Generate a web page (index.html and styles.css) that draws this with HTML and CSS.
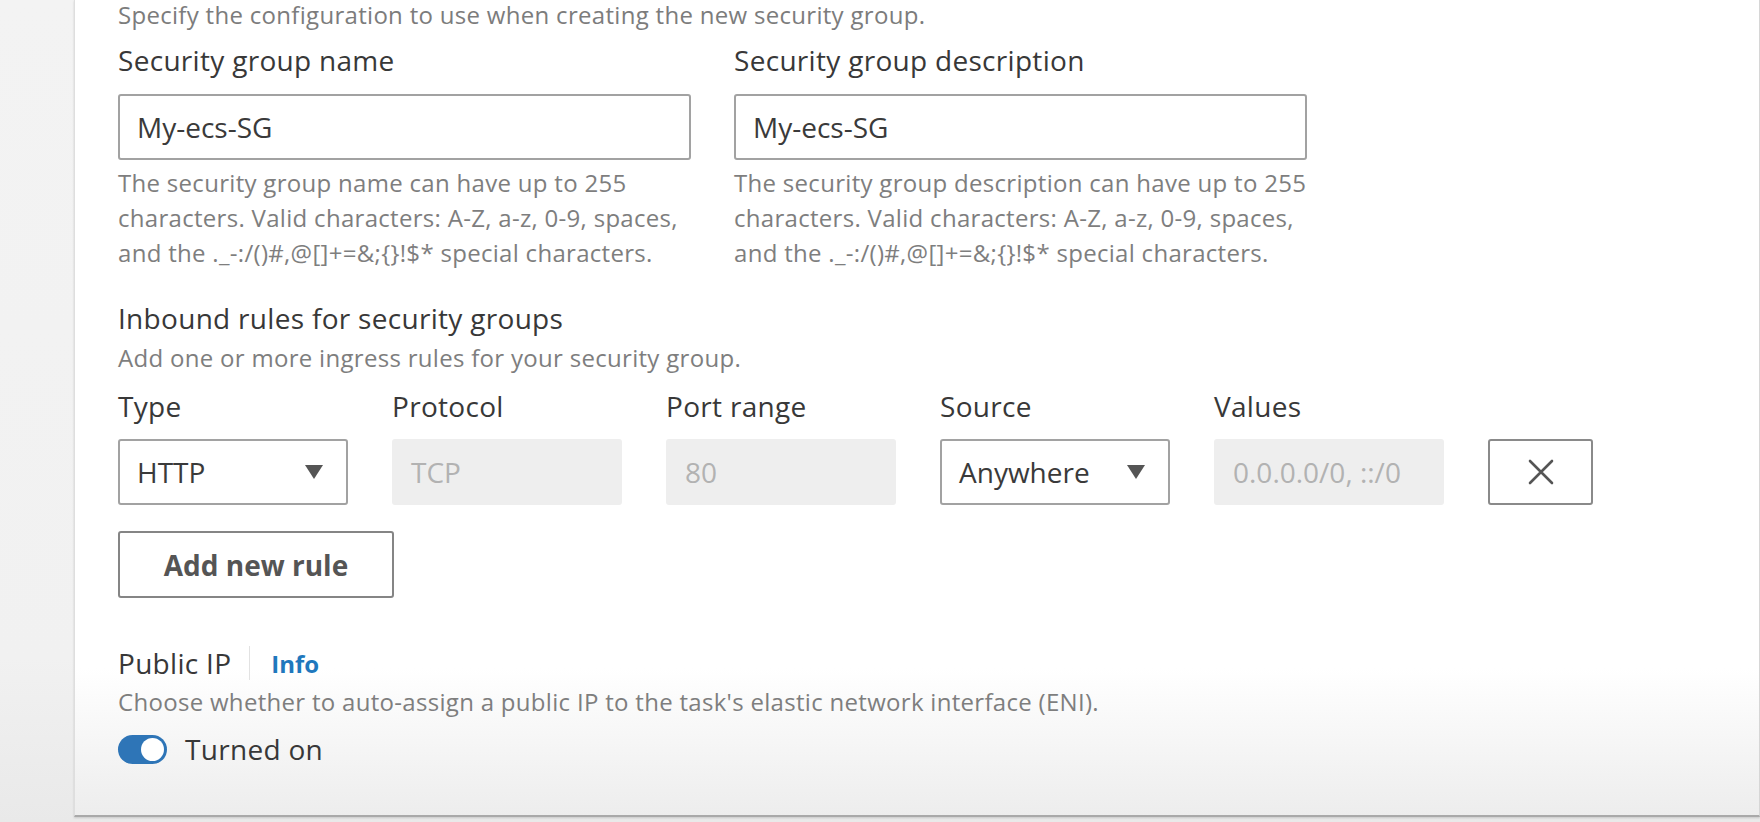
FILE: index.html
```html
<!DOCTYPE html>
<html lang="en">
<head>
<meta charset="utf-8">
<title>Security group configuration</title>
<link rel="stylesheet" href="styles.css">
</head>
<body>
<div class="page">
  <div class="gutter"></div>
  <main class="panel">
    <p class="intro">Specify the configuration to use when creating the new security group.</p>

    <div class="two-col">
      <div class="field">
        <label class="label">Security group name</label>
        <div class="input">My-ecs-SG</div>
        <p class="help">The security group name can have up to 255<br>characters. Valid characters: A-Z, a-z, 0-9, spaces,<br>and the ._-:/()#,@[]+=&amp;;{}!$* special characters.</p>
      </div>
      <div class="field">
        <label class="label">Security group description</label>
        <div class="input">My-ecs-SG</div>
        <p class="help">The security group description can have up to 255<br>characters. Valid characters: A-Z, a-z, 0-9, spaces,<br>and the ._-:/()#,@[]+=&amp;;{}!$* special characters.</p>
      </div>
    </div>

    <h3 class="section-title">Inbound rules for security groups</h3>
    <p class="section-desc">Add one or more ingress rules for your security group.</p>

    <div class="rules">
      <div class="label">Type</div>
      <div class="label">Protocol</div>
      <div class="label">Port range</div>
      <div class="label">Source</div>
      <div class="label">Values</div>
      <div></div>

      <div class="select">
        <span>HTTP</span>
        <svg class="caret" width="20" height="16" viewBox="0 0 20 16"><polygon points="1,1 19,1 10,15" fill="#555"/></svg>
      </div>
      <div class="input disabled">TCP</div>
      <div class="input disabled">80</div>
      <div class="select">
        <span>Anywhere</span>
        <svg class="caret" width="20" height="16" viewBox="0 0 20 16"><polygon points="1,1 19,1 10,15" fill="#555"/></svg>
      </div>
      <div class="input disabled">0.0.0.0/0, ::/0</div>
      <button class="icon-btn" type="button" aria-label="Remove">
        <svg width="28" height="28" viewBox="0 0 28 28"><path d="M3 3 L25 25 M25 3 L3 25" stroke="#555" stroke-width="2.6" stroke-linecap="round" fill="none"/></svg>
      </button>
    </div>

    <button class="btn" type="button">Add new rule</button>

    <div class="ip-head">
      <span class="ip-title">Public IP</span>
      <span class="divider"></span>
      <a class="info" href="#">Info</a>
    </div>
    <p class="section-desc tight">Choose whether to auto-assign a public IP to the task's elastic network interface (ENI).</p>

    <div class="toggle-row">
      <span class="toggle"><span class="knob"></span></span>
      <span class="toggle-text">Turned on</span>
    </div>
  </main>
</div>
</body>
</html>
```

FILE: styles.css
```css
html, body {
  margin: 0;
  padding: 0;
}

body {
  background: #f1f1f1;
  font-family: "Open Sans", "DejaVu Sans", sans-serif;
  color: #3a3a3a;
  overflow: hidden;
}

.page {
  display: flex;
  height: 822px;
  background: linear-gradient(to bottom, #f3f3f3 0%, #f1f1f1 80%, #e9e9e9 100%);
}

.gutter {
  width: 74px;
  flex: none;
}

.panel {
  flex: 1;
  height: 817px;
  box-sizing: border-box;
  padding-left: 43px;
  background: linear-gradient(to bottom, #ffffff 0%, #ffffff 82%, #ededed 100%);
  border-left: 1px solid #dedede;
  border-right: 1px solid #d6d6d6;
  border-bottom: 2px solid #a9a9a9;
  box-shadow: 0 1px 2px rgba(0,0,0,0.15);
}

.intro {
  margin: 0;
  font-size: 24px;
  line-height: 30px;
  letter-spacing: 0.3px;
  color: #7c7c7c;
}

.two-col {
  display: grid;
  grid-template-columns: 573px 573px;
  column-gap: 43px;
  margin-top: 10px;
}

.field {
  display: flex;
  flex-direction: column;
}

.label {
  display: block;
  font-size: 28px;
  line-height: 40px;
  letter-spacing: 0.3px;
  color: #383838;
}

.input {
  box-sizing: border-box;
  height: 66px;
  border: 2px solid #a2a2a2;
  border-radius: 3px;
  background: #fff;
  padding: 0 17px;
  display: flex;
  align-items: center;
  font-size: 28px;
  color: #3a3a3a;
  white-space: nowrap;
}

.field .input {
  margin-top: 14px;
}

.help {
  margin: 5px 0 0;
  font-size: 24px;
  line-height: 35px;
  letter-spacing: 0.3px;
  color: #7e7e7e;
}

.section-title {
  margin: 28px 0 0;
  font-size: 28px;
  line-height: 40px;
  font-weight: 400;
  letter-spacing: 0.3px;
  color: #383838;
}

.section-desc {
  margin: 3px 0 0;
  font-size: 24px;
  line-height: 34px;
  letter-spacing: 0.3px;
  color: #7e7e7e;
}

.section-desc.tight {
  margin-top: 2px;
}

.rules {
  display: grid;
  grid-template-columns: repeat(5, 230px) 105px;
  column-gap: 44px;
  row-gap: 13px;
  margin-top: 11px;
  align-items: center;
}

.select {
  box-sizing: border-box;
  height: 66px;
  border: 2px solid #a2a2a2;
  border-radius: 3px;
  background: #fff;
  padding: 0 22px 0 17px;
  display: flex;
  align-items: center;
  justify-content: space-between;
  font-size: 28px;
  color: #3a3a3a;
}

.caret {
  display: block;
}

.input.disabled {
  background: #eeeeee;
  border-color: #eeeeee;
  color: #b2b2b2;
}

.icon-btn {
  box-sizing: border-box;
  width: 105px;
  height: 66px;
  border: 2px solid #8a8a8a;
  border-radius: 3px;
  background: #fff;
  padding: 0;
  display: flex;
  align-items: center;
  justify-content: center;
}

.btn {
  box-sizing: border-box;
  display: block;
  margin-top: 26px;
  width: 276px;
  height: 67px;
  border: 2px solid #858585;
  border-radius: 3px;
  background: #fff;
  font-family: "Open Sans", "DejaVu Sans", sans-serif;
  font-size: 28px;
  font-weight: 700;
  color: #555;
  padding: 0;
}

.ip-head {
  display: flex;
  align-items: center;
  margin-top: 45px;
  height: 40px;
}

.ip-title {
  font-size: 28px;
  line-height: 40px;
  letter-spacing: 0.3px;
  color: #383838;
}

.divider {
  width: 1px;
  height: 34px;
  background: #e2e2e2;
  margin: 0 21px 0 18px;
}

.info {
  font-size: 24px;
  font-weight: 700;
  color: #1f78bd;
  text-decoration: none;
}

.toggle-row {
  display: flex;
  align-items: center;
  margin-top: 10px;
  height: 40px;
}

.toggle {
  box-sizing: border-box;
  width: 49px;
  height: 29px;
  border-radius: 15px;
  background: #2e75b7;
  display: flex;
  align-items: center;
  justify-content: flex-end;
  padding-right: 3px;
}

.knob {
  width: 23px;
  height: 23px;
  border-radius: 50%;
  background: #fff;
}

.toggle-text {
  margin-left: 18px;
  font-size: 28px;
  line-height: 40px;
  letter-spacing: 0.3px;
  color: #383838;
}
```
